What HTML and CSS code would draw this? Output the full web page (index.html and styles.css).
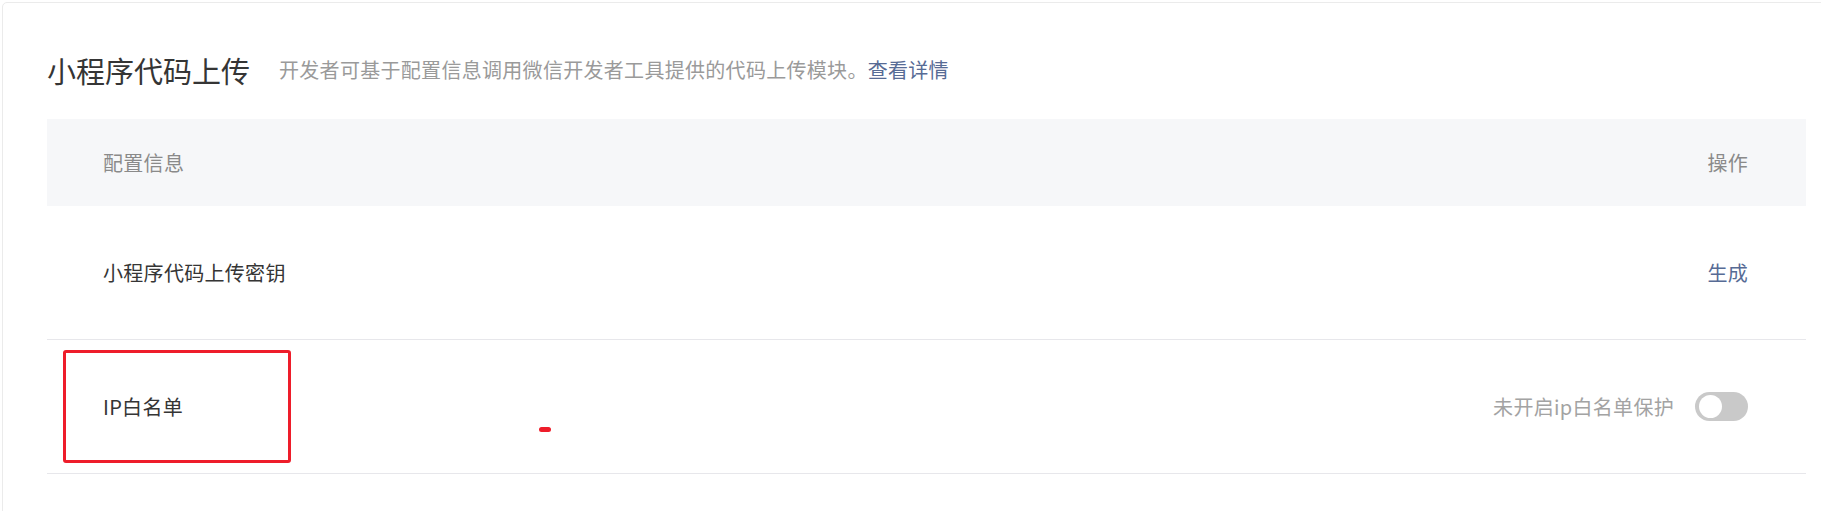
FILE: index.html
```html
<!DOCTYPE html>
<html lang="zh-CN">
<head>
<meta charset="utf-8">
<title>小程序代码上传</title>
<link rel="stylesheet" href="styles.css">
</head>
<body>
<div class="card">
  <div class="head">
    <h2 class="title">小程序代码上传</h2>
    <p class="desc">开发者可基于配置信息调用微信开发者工具提供的代码上传模块。<a class="link" href="#">查看详情</a></p>
  </div>
  <div class="table">
    <div class="row row-head">
      <span class="cell">配置信息</span>
      <span class="cell">操作</span>
    </div>
    <div class="row">
      <span class="cell label">小程序代码上传密钥</span>
      <a class="cell link" href="#">生成</a>
    </div>
    <div class="row row-ip">
      <span class="cell label">IP白名单</span>
      <div class="status">
        <span class="status-text">未开启ip白名单保护</span>
        <span class="switch"><span class="knob"></span></span>
      </div>
      <div class="mark-box"></div>
      <div class="mark-dash"></div>
    </div>
  </div>
</div>
</body>
</html>
```
FILE: styles.css
```css
html, body {
  margin: 0;
  padding: 0;
  overflow: hidden;
  background: #ffffff;
}

body {
  font-family: "Noto Sans CJK SC", "Noto Sans", sans-serif;
  color: #353535;
}

.card {
  margin: 2px 0 0 2px;
  width: 1759px;
  min-height: 600px;
  padding: 47px 44px 0 44px;
  border: 1px solid #ebebeb;
  border-radius: 5px;
  background: #fff;
}

.head {
  display: flex;
  align-items: center;
  height: 40px;
  margin-bottom: 29px;
}

.title {
  margin: 0;
  font-size: 29px;
  font-weight: 400;
  line-height: 40px;
  color: #353535;
}

.desc {
  margin: 0 0 0 29px;
  font-size: 20px;
  line-height: 32px;
  letter-spacing: 0.3px;
  color: #9a9a9a;
}

.link {
  color: #576b95;
  text-decoration: none;
}

.table {
  width: 100%;
}

.row {
  position: relative;
  display: flex;
  align-items: center;
  justify-content: space-between;
  box-sizing: border-box;
  height: 134px;
  padding: 0 58px 0 56px;
  border-bottom: 1px solid #e7e7eb;
  font-size: 20px;
  line-height: 28px;
  letter-spacing: 0.3px;
}

.row-head {
  height: 87px;
  background: #f6f7f9;
  border-bottom: none;
  color: #8a8a8a;
}

.label {
  color: #353535;
}

.status {
  display: flex;
  align-items: center;
  gap: 21px;
}

.status-text {
  color: #a3a3a3;
}

.switch {
  position: relative;
  display: block;
  width: 53px;
  height: 29px;
  border-radius: 15px;
  background: #c9c9c9;
}

.knob {
  position: absolute;
  left: 4px;
  top: 3px;
  width: 23px;
  height: 23px;
  border-radius: 50%;
  background: #ffffff;
}

.mark-box {
  position: absolute;
  left: 16px;
  top: 10px;
  width: 228px;
  height: 113px;
  box-sizing: border-box;
  border: 3px solid #ee1d2a;
  border-radius: 3px;
}

.mark-dash {
  position: absolute;
  left: 492px;
  top: 87px;
  width: 12px;
  height: 5px;
  border-radius: 3px;
  background: #ee1d2a;
}
```
